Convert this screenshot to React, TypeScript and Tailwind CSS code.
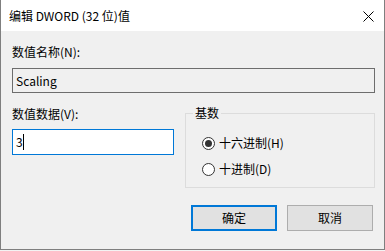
import React from "react";

const font = {
  fontFamily: '"Noto Sans CJK SC", "Noto Sans", sans-serif',
};

function Radio({ label, checked }: { label: string; checked?: boolean }) {
  return (
    <div className="flex items-center h-[16px]">
      <span className="w-[13px] h-[13px] rounded-full border border-[#333333] bg-white flex items-center justify-center">
        {checked && <span className="w-[7px] h-[7px] rounded-full bg-[#333333]" />}
      </span>
      <span className="ml-[4px] text-[12px] leading-[16px] text-black">{label}</span>
    </div>
  );
}

export default function App() {
  return (
    <div className="w-[385px] h-[251px] bg-[#f3f3f3]" style={font}>
      <div className="w-[385px] h-[250px] flex flex-col border-l border-r border-b border-[#7f7f7f] bg-[#f0f0f0]">
        {/* Title bar */}
        <div className="h-[31px] bg-white flex items-center justify-between pl-[8px] pr-[10px]">
          <span className="text-[12px] leading-[16px] text-black">编辑 DWORD (32 位)值</span>
          <svg width="11" height="11" viewBox="0 0 11 11" className="mt-[2px]">
            <path d="M0.5 0.5L10.5 10.5M10.5 0.5L0.5 10.5" stroke="#000" strokeWidth="1" />
          </svg>
        </div>

        {/* Body */}
        <div className="flex flex-col pl-[11px]">
          <div className="mt-[13px] text-[12px] leading-[16px] text-black">数值名称(N):</div>
          <div className="mt-[8px] w-[363px] h-[25px] border border-[#6d6d6d] bg-[#f0f0f0] flex items-center pl-[3px] text-[12px] text-black">
            Scaling
          </div>

          <div className="flex items-start">
            <div className="flex flex-col w-[162px]">
              <div className="mt-[13px] text-[12px] leading-[16px] text-black">数值数据(V):</div>
              <div className="mt-[7px] h-[26px] border border-[#0078d7] bg-white flex items-center pl-[3px] text-[12px] text-black">
                3
                <span className="w-px h-[16px] bg-black" />
              </div>
            </div>

            <div className="relative mt-[20px] ml-[11px] w-[190px] h-[75px] border border-[#dcdcdc] flex flex-col pl-[16px] pt-[21px] gap-[10px]">
              <span className="absolute -top-[9px] left-[7px] px-[2px] bg-[#f0f0f0] text-[12px] leading-[16px] text-black">
                基数
              </span>
              <Radio label="十六进制(H)" checked />
              <Radio label="十进制(D)" />
            </div>
          </div>

          <div className="mt-[17px] flex justify-end gap-[10px] pr-[11px]">
            <button className="w-[86px] h-[26px] border-2 border-[#0078d7] bg-[#e1e1e1] text-[12px] text-black">
              确定
            </button>
            <button className="w-[86px] h-[26px] border border-[#adadad] bg-[#e1e1e1] text-[12px] text-black">
              取消
            </button>
          </div>
        </div>
      </div>
    </div>
  );
}
